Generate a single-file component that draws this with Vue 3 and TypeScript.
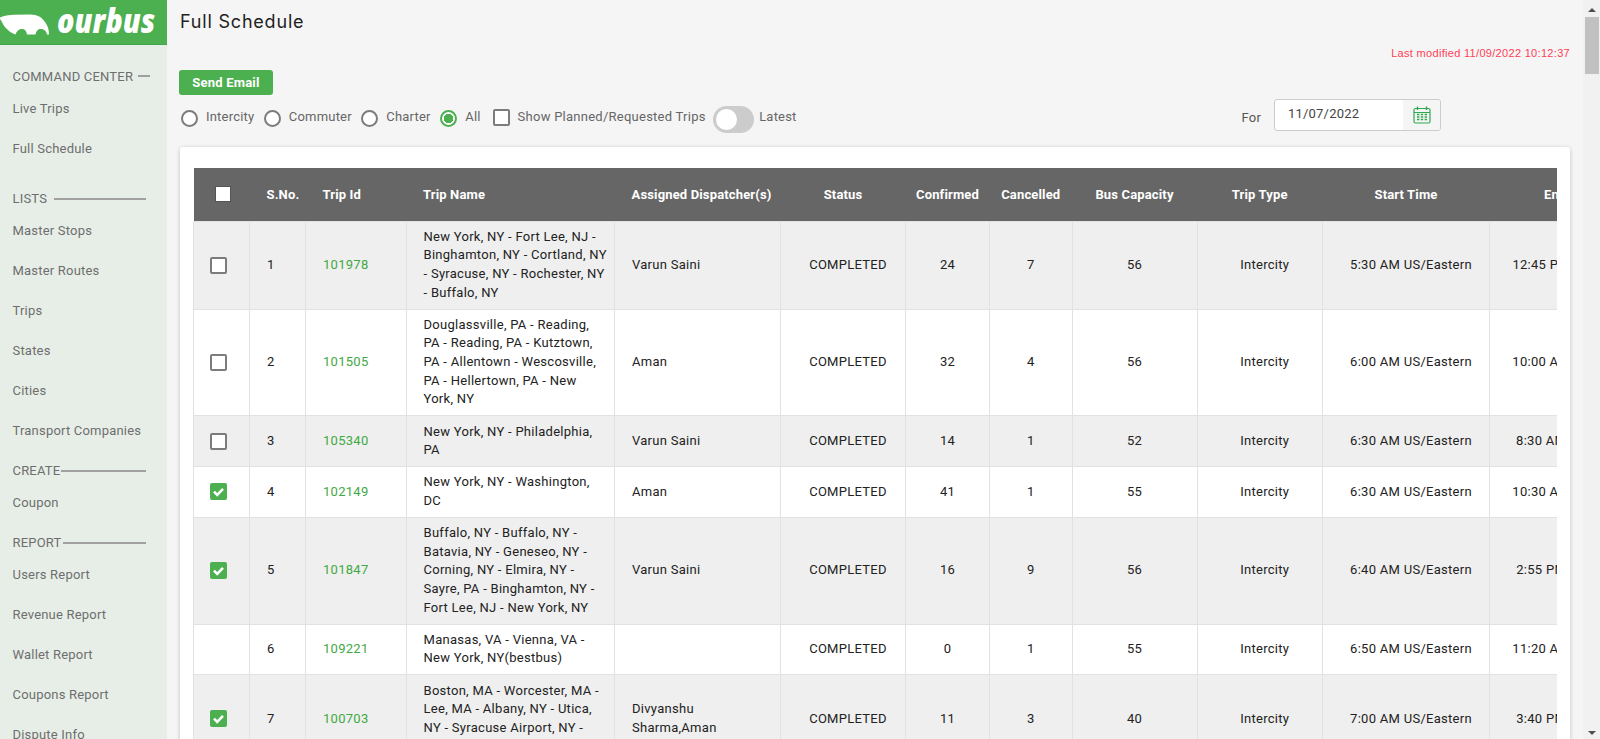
<script setup lang="ts">
interface NavBlock {
  label: string
  kind: string
  items: string[]
}
interface Trip {
  no: number
  id: string
  name: string
  dispatcher: string
  confirmed: number
  cancelled: number
  capacity: number
  start: string
  end: string
  check: 'on' | 'off' | 'none'
}

const nav: NavBlock[] = [
  { label: 'COMMAND CENTER', kind: 'first', items: ['Live Trips', 'Full Schedule'] },
  { label: 'LISTS', kind: 'lists', items: ['Master Stops', 'Master Routes', 'Trips', 'States', 'Cities', 'Transport Companies'] },
  { label: 'CREATE', kind: 'plain', items: ['Coupon'] },
  { label: 'REPORT', kind: 'plain', items: ['Users Report', 'Revenue Report', 'Wallet Report', 'Coupons Report', 'Dispute Info'] },
]

const filters: { label: string; on: boolean }[] = [
  { label: 'Intercity', on: false },
  { label: 'Commuter', on: false },
  { label: 'Charter', on: false },
  { label: 'All', on: true },
]

const colWidths: number[] = [56, 56, 100.5, 208.5, 166, 125, 84, 82.5, 125, 125.5, 167, 165]

const trips: Trip[] = [
  { no: 1, id: '101978', name: 'New York, NY - Fort Lee, NJ - Binghamton, NY - Cortland, NY - Syracuse, NY - Rochester, NY - Buffalo, NY', dispatcher: 'Varun Saini', confirmed: 24, cancelled: 7, capacity: 56, start: '5:30 AM US/Eastern', end: '12:45 PM US/Eastern', check: 'off' },
  { no: 2, id: '101505', name: 'Douglassville, PA - Reading, PA - Reading, PA - Kutztown, PA - Allentown - Wescosville, PA - Hellertown, PA - New York, NY', dispatcher: 'Aman', confirmed: 32, cancelled: 4, capacity: 56, start: '6:00 AM US/Eastern', end: '10:00 AM US/Eastern', check: 'off' },
  { no: 3, id: '105340', name: 'New York, NY - Philadelphia, PA', dispatcher: 'Varun Saini', confirmed: 14, cancelled: 1, capacity: 52, start: '6:30 AM US/Eastern', end: '8:30 AM US/Eastern', check: 'off' },
  { no: 4, id: '102149', name: 'New York, NY - Washington, DC', dispatcher: 'Aman', confirmed: 41, cancelled: 1, capacity: 55, start: '6:30 AM US/Eastern', end: '10:30 AM US/Eastern', check: 'on' },
  { no: 5, id: '101847', name: 'Buffalo, NY - Buffalo, NY - Batavia, NY - Geneseo, NY - Corning, NY - Elmira, NY - Sayre, PA - Binghamton, NY - Fort Lee, NJ - New York, NY', dispatcher: 'Varun Saini', confirmed: 16, cancelled: 9, capacity: 56, start: '6:40 AM US/Eastern', end: '2:55 PM US/Eastern', check: 'on' },
  { no: 6, id: '109221', name: 'Manasas, VA - Vienna, VA - New York, NY(bestbus)', dispatcher: '', confirmed: 0, cancelled: 1, capacity: 55, start: '6:50 AM US/Eastern', end: '11:20 AM US/Eastern', check: 'none' },
  { no: 7, id: '100703', name: 'Boston, MA - Worcester, MA - Lee, MA - Albany, NY - Utica, NY - Syracuse Airport, NY - Rochester, NY - Buffalo, NY', dispatcher: 'Divyanshu Sharma,Aman', confirmed: 11, cancelled: 3, capacity: 40, start: '7:00 AM US/Eastern', end: '3:40 PM US/Eastern', check: 'on' },
]
</script>

<template>
  <div class="app">
    <aside class="sidebar">
      <div class="brand">
        <svg class="bus" width="50" height="36" viewBox="0 0 50 36">
          <path fill="#fff" d="M0 17.5 C4 15.5 9 15 14 14.8 L30 14.4 C37 14.2 42 17 45 22 C48 26 49 30 49 34.5 L47 34.5 C46.5 31 44 29 40.5 29 C37.5 29 36 31.5 35.5 34.5 L27 34.5 C26.5 31 25 29 22 29 C19 29 16.5 31 15.5 34.5 C11 33 6 29 3.5 25 C2 22 1 20 0 19 Z" />
        </svg>
        <span class="wordmark">ourbus</span>
      </div>
      <nav class="nav">
        <section v-for="block in nav" :key="block.label" :class="['block', block.kind]">
          <div class="nav-label">
            <span>{{ block.label }}</span>
            <i class="rule"></i>
          </div>
          <a v-for="item in block.items" :key="item" class="nav-item">{{ item }}</a>
        </section>
      </nav>
    </aside>

    <main class="main">
      <h1 class="title">Full Schedule</h1>
      <div class="modified">Last modified 11/09/2022 10:12:37</div>
      <button class="send" type="button">Send Email</button>

      <div class="toolbar">
        <label v-for="f in filters" :key="f.label" class="opt">
          <span :class="['radio', { on: f.on }]"></span>
          <span>{{ f.label }}</span>
        </label>
        <label class="opt opt-planned">
          <span class="box"></span>
          <span>Show Planned/Requested Trips</span>
        </label>
        <span class="toggle"><i></i></span>
        <span class="latest">Latest</span>
        <span class="for">For</span>
        <div class="date">
          <span class="date-value">11/07/2022</span>
          <span class="date-addon">
            <svg width="18" height="18" viewBox="0 0 18 18" fill="none" stroke="#2fa84f">
              <rect x="1" y="2.5" width="16" height="14.5" rx="1.5" stroke-width="1.2" />
              <path d="M1 6.5h16" stroke-width="1.2" />
              <path d="M4.5 .5v3.5M13.5 .5v3.5" stroke-width="1.4" />
              <path d="M4 8.5h2.4M7.8 8.5h2.4M11.6 8.5H14M4 11h2.4M7.8 11h2.4M11.6 11H14M4 13.5h2.4M7.8 13.5h2.4M11.6 13.5H14" stroke-width="1.6" />
            </svg>
          </span>
        </div>
      </div>

      <div class="card">
        <div class="table-wrap">
          <table class="table">
            <colgroup>
              <col v-for="(w, i) in colWidths" :key="i" :style="{ width: w + 'px' }" />
            </colgroup>
            <thead>
              <tr>
                <th class="th-check"><span class="head-box"></span></th>
                <th>S.No.</th>
                <th>Trip Id</th>
                <th>Trip Name</th>
                <th>Assigned Dispatcher(s)</th>
                <th class="c">Status</th>
                <th class="c">Confirmed</th>
                <th class="c">Cancelled</th>
                <th class="c">Bus Capacity</th>
                <th class="c">Trip Type</th>
                <th class="c">Start Time</th>
                <th class="c">End Time</th>
              </tr>
            </thead>
            <tbody>
              <tr v-for="t in trips" :key="t.no">
                <td class="td-check">
                  <span v-if="t.check === 'off'" class="box"></span>
                  <span v-else-if="t.check === 'on'" class="box-on">
                    <svg width="17" height="17" viewBox="0 0 17 17">
                      <path d="M4 8.6 7.2 11.8 13 5.8" fill="none" stroke="#fff" stroke-width="2.6" />
                    </svg>
                  </span>
                </td>
                <td>{{ t.no }}</td>
                <td class="id">{{ t.id }}</td>
                <td>{{ t.name }}</td>
                <td>{{ t.dispatcher }}</td>
                <td class="cs">COMPLETED</td>
                <td class="c">{{ t.confirmed }}</td>
                <td class="c">{{ t.cancelled }}</td>
                <td class="c">{{ t.capacity }}</td>
                <td class="cs">Intercity</td>
                <td class="cs">{{ t.start }}</td>
                <td class="cs">{{ t.end }}</td>
              </tr>
            </tbody>
          </table>
        </div>
      </div>
    </main>

    <div class="scrollbar">
      <i class="arrow up"></i>
      <i class="thumb"></i>
      <i class="arrow down"></i>
    </div>
  </div>
</template>

<style>
html,
body {
  margin: 0;
  overflow: hidden;
}
</style>

<style scoped>
.app {
  display: flex;
  height: 739px;
  overflow: hidden;
  background: #f5f5f5;
  font-family: Roboto, "Liberation Sans", sans-serif;
  font-size: 13px;
  color: #222;
}

/* sidebar */
.sidebar {
  flex: 0 0 167px;
  height: 100%;
  overflow: hidden;
  background: #e7eee8;
}
.brand {
  position: relative;
  height: 44px;
  background: #4caf50;
  border-bottom: 1px solid #43a347;
}
.bus {
  position: absolute;
  left: 0;
  top: 0;
}
.wordmark {
  position: absolute;
  left: 57px;
  top: -3px;
  font-family: "Open Sans", sans-serif;
  font-style: italic;
  font-weight: 800;
  font-size: 34px;
  line-height: 46px;
  color: #fff;
  transform: scaleX(0.85);
  transform-origin: left center;
}
.nav {
  padding-left: 12.5px;
}
.block.first {
  margin-top: 19px;
}
.block.lists {
  margin-top: 18.5px;
}
.block.plain {
  margin-top: 8px;
}
.nav-label {
  display: flex;
  align-items: center;
  width: 133.5px;
  height: 24px;
  color: #6e6e6e;
  letter-spacing: 0.2px;
}
.nav-label span {
  flex: none;
  white-space: nowrap;
}
.rule {
  flex: 1;
  height: 2px;
  margin-left: 1px;
  background: #a0a0a0;
}
.lists .rule {
  margin-left: 7px;
}
.first .nav-label {
  width: 137.5px;
}
.first .rule {
  margin-left: 5px;
}
.nav-item {
  display: flex;
  align-items: center;
  height: 40px;
  color: #6e6e6e;
  letter-spacing: 0.2px;
  white-space: nowrap;
}

/* main */
.main {
  flex: 1;
  min-width: 0;
  padding: 0 13px;
}
.title {
  height: 45px;
  margin: 0;
  font-family: Inter, sans-serif;
  font-size: 18px;
  font-weight: 400;
  line-height: 44px;
  letter-spacing: 0.8px;
  color: #222;
}
.modified {
  height: 16px;
  font-family: "Liberation Sans", Arial, sans-serif;
  font-size: 11px;
  line-height: 16px;
  letter-spacing: 0.31px;
  text-align: right;
  color: #ff3d55;
}
.send {
  display: block;
  width: 94px;
  height: 25px;
  margin: 9px 0 0 -1px;
  padding: 0;
  border: 0;
  border-radius: 3px;
  background: #4caf50;
  color: #fff;
  font-family: Roboto, sans-serif;
  font-size: 13px;
  font-weight: 700;
  letter-spacing: 0.2px;
}
.toolbar {
  display: flex;
  align-items: center;
  height: 32px;
  margin-top: 4px;
  padding-right: 129px;
  color: #666;
  font-size: 13px;
  letter-spacing: 0.2px;
}
.opt {
  display: flex;
  align-items: center;
  gap: 8px;
  margin: 5px 8.5px 0 1px;
}
.opt-planned {
  margin-left: 3.5px;
  letter-spacing: 0.25px;
}
.opt > span:last-child {
  position: relative;
  top: -1px;
}
.radio {
  box-sizing: border-box;
  display: block;
  width: 17px;
  height: 17px;
  border: 2px solid #7c7c7c;
  border-radius: 50%;
  background: #fff;
  margin-top: 2px;
}
.radio.on {
  border-color: #4caf50;
  background: radial-gradient(circle, #4caf50 0 4.5px, #fff 5px);
}
.box {
  box-sizing: border-box;
  display: block;
  width: 17px;
  height: 17px;
  border: 2px solid #7c7c7c;
  border-radius: 2px;
  background: #fff;
}
.box-on {
  display: block;
  width: 17px;
  height: 17px;
  border-radius: 2px;
  background: #4caf50;
}
.toggle {
  position: relative;
  display: block;
  width: 41px;
  height: 27px;
  margin: 8px 0 0 -1px;
  border-radius: 14px;
  background: #ccc;
}
.toggle i {
  position: absolute;
  left: 3px;
  top: 3px;
  width: 21px;
  height: 21px;
  border-radius: 50%;
  background: #fff;
}
.latest {
  margin: 5px 0 0 5px;
  position: relative;
  top: -1px;
}
.for {
  margin-left: auto;
  margin-right: 13px;
  position: relative;
  top: 2px;
  color: #555;
}
.date {
  box-sizing: border-box;
  display: flex;
  width: 167px;
  height: 32px;
  border: 1px solid #ccc;
  border-radius: 3px;
  background: #fff;
  overflow: hidden;
}
.date-value {
  flex: 1;
  padding-left: 13px;
  font-size: 13px;
  line-height: 28px;
  color: #444;
}
.date-addon {
  flex: 0 0 37px;
  display: flex;
  align-items: center;
  justify-content: center;
  background: #f5f5f5;
}

/* card + table */
.card {
  margin-top: 16px;
  padding: 21px 13px 0;
  border-radius: 3px;
  background: #fff;
  box-shadow: 0 1px 4px rgba(0, 0, 0, 0.22);
}
.table-wrap {
  overflow: hidden;
}
.table {
  table-layout: fixed;
  width: 1461px;
  border-collapse: collapse;
  font-size: 13px;
  line-height: 18.57px;
  letter-spacing: 0.28px;
}
th {
  box-sizing: border-box;
  height: 53px;
  padding: 2px 5px 0 17px;
  background: #666;
  color: #fff;
  font-weight: 700;
  letter-spacing: 0.15px;
  text-align: left;
  white-space: nowrap;
}
th.c {
  padding: 2px 0 0;
  text-align: center;
}
td {
  padding: 6.4px 5px 6.4px 17px;
  border: 1px solid #e2e2e2;
  color: #222;
  vertical-align: middle;
}
tbody tr:nth-child(odd) td {
  background: #efefef;
}
tbody tr:nth-child(even) td {
  background: #fff;
}
td.c {
  padding: 0;
  text-align: center;
}
td.cs {
  padding: 0 0 0 10px;
  text-align: center;
  white-space: nowrap;
}
td.id {
  color: #3fa944;
}
td.td-check {
  padding-left: 16px;
}
.th-check {
  padding: 0 0 0 21.5px;
}
.head-box {
  display: block;
  box-sizing: border-box;
  width: 16px;
  height: 16px;
  border: 1px solid #555;
  background: #fff;
}

/* fake native scrollbar */
.scrollbar {
  position: relative;
  flex: 0 0 17px;
  height: 100%;
  background: #f1f1f1;
}
.thumb {
  position: absolute;
  top: 17px;
  left: 2px;
  width: 14px;
  height: 57px;
  background: #c1c1c1;
}
.arrow {
  position: absolute;
  left: 5px;
  width: 0;
  height: 0;
  border-left: 4px solid transparent;
  border-right: 4px solid transparent;
}
.arrow.up {
  top: 8px;
  border-bottom: 4px solid #505050;
}
.arrow.down {
  bottom: 4px;
  border-top: 4px solid #505050;
}
</style>
